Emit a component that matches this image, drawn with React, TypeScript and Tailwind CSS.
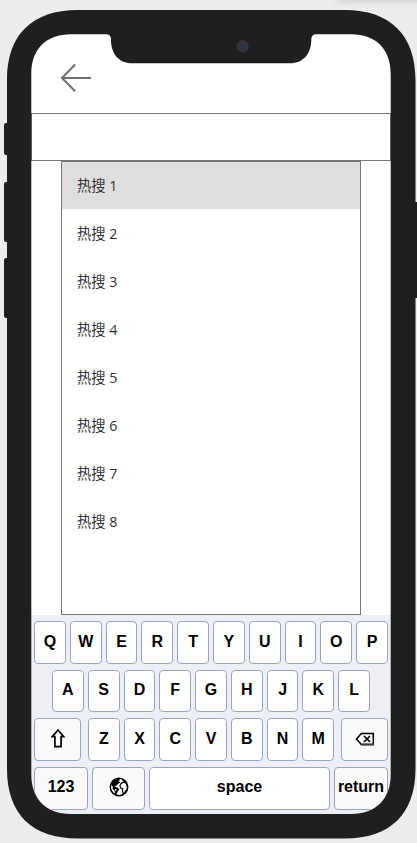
import type { ReactNode } from 'react';

const suggestions = [1, 2, 3, 4, 5, 6, 7, 8];

function Key({ children, className = 'flex-1 bg-white pb-px' }: { children?: ReactNode; className?: string }) {
  return (
    <div
      className={`flex h-full items-center justify-center rounded-[4px] border border-[#9aa5c4] leading-5 whitespace-nowrap ${className}`}
    >
      {children}
    </div>
  );
}

function Letters({ text }: { text: string }) {
  return (
    <>
      {text.split('').map((letter) => (
        <Key key={letter}>{letter}</Key>
      ))}
    </>
  );
}

function ShiftIcon() {
  return (
    <svg className="mb-[3px]" width="16" height="20" viewBox="0 0 16 20" fill="none" stroke="#000" strokeWidth="1.7">
      <path d="M8 2 2.300 8.700h2.600v10h6.200v-10h2.600z" />
    </svg>
  );
}

function GlobeIcon() {
  return (
    <svg width="20" height="20" viewBox="0 0 20 20" fill="none">
      <circle cx="10" cy="10" r="8.7" stroke="#000" strokeWidth="1.5" />
      <path d="M2 7 5 3.2 10 1.5l1 1.6-1.5 1 1.7 1.3-1.8 1.2-1.8 1.8-2 .3 1.4 1.5 2 .6 1.4 2-1.8 1.8-.8 3-1.7-.7-.6-3.1-2-2.1.4-1.8z" fill="#000" />
      <path d="M5.600 11.800 7.700 12.500 6.800 14.800z" fill="#fafafa" />
      <path d="m12 6.4 2.8-1.2 2 .8 1.7 3.6-.4 3-1.7 1.5-.8 2-1.4.6-.8-2.9.2-2.2-1.9-.6-.8-2.2z" stroke="#000" strokeWidth="1.2" />
      <path d="M13 3 15.600 3.400 17.200 5.600 14.600 5.100z" fill="#000" />
    </svg>
  );
}

function BackspaceIcon() {
  return (
    <svg className="mb-px" width="20" height="14" viewBox="0 0 20 14" fill="none" stroke="#000" strokeWidth="1.5">
      <path d="M6.3 1.5h12v11h-12L1.5 7z" />
      <path d="m9 4 6 6m0-6-6 6" strokeWidth="1.700" />
      <path d="M6.500 12.500h12" stroke="#444" strokeWidth="2" />
    </svg>
  );
}

function PhoneFrame() {
  return (
    <svg className="pointer-events-none absolute inset-0" width="417" height="843" viewBox="0 0 417 843">
      <path
        fill="#1f1f1f"
        fillRule="evenodd"
        d="M78 10H345C390 10 415.5 35 415.5 80V769C415.5 814 390 838.5 345 838.5H78C32 838.5 7 814 7 769V80C7 35 32 10 78 10Z
           M71 34.3C46 34.3 31.3 49 31.3 74V774.5C31.3 799 46 814 71 814H351C376 814 390.7 799 390.7 774.5V74C390.7 49 376 34.3 351 34.3H317C313 34.3 311.3 36 311.3 40C311.3 54 303 63.3 290 63.3H132C119 63.3 111 54 111 40C111 36 109.500 34.3 105.500 34.3Z"
      />
      <path
        fill="#1f1f1f"
        d="M8 123H6a2 2 0 0 0-2 2v28a2 2 0 0 0 2 2h2zM8 182H6a2 2 0 0 0-2 2v56a2 2 0 0 0 2 2h2zM8 258H6a2 2 0 0 0-2 2v56a2 2 0 0 0 2 2h2zM415 202h2v96h-2z"
      />
      <circle cx="242.500" cy="46.300" r="6.200" fill="#333436" />
      <circle cx="242.500" cy="46.300" r="3.200" fill="#29324c" />
    </svg>
  );
}

export default function App() {
  return (
    <div className="relative h-[843px] w-[417px] overflow-hidden bg-[#ededed] pt-[34px] pl-[31px]">
      <div className="absolute -top-2 left-[338px] h-2 w-[100px] shadow-[0_0_8px_rgba(0,0,0,0.2)]" />
      <div className="flex h-[780px] w-[360px] flex-col overflow-hidden rounded-[38px] bg-white">
        <header className="flex h-[79px] shrink-0 items-start pt-[29px] pl-[30px]">
          <svg width="31" height="30" viewBox="0 0 31 30" fill="none" stroke="#6e7079" strokeWidth="2">
            <path d="M30 15H1M14.200 1.500 .900 15l13.300 13.300" />
          </svg>
        </header>
        <input aria-label="Search" className="h-12 w-full shrink-0 border border-[#767676] bg-white px-3 outline-none" />
        <ul className="mx-[30px] h-[454px] shrink-0 border border-[#767676] bg-white font-['Open_Sans','Noto_Sans_CJK_SC',sans-serif] text-[14.300px] text-[#333]">
          {suggestions.map((n) => (
            <li key={n} className={`flex items-center pl-[15px] ${n === 1 ? 'h-[47px] bg-[#dfdfdf] pt-px' : 'h-12 bg-white pt-[2px]'}`}>
              热搜 {n}
            </li>
          ))}
        </ul>
        <section className="flex flex-1 flex-col gap-[6px] bg-[#eeeff4] px-[3px] pt-[6px] pb-[4.500px] font-['Liberation_Sans',Arial,sans-serif] text-[16px] font-bold text-black">
          <div className="flex min-h-0 flex-1 gap-1">
            <Letters text="QWERTYUIOP" />
          </div>
          <div className="flex min-h-0 flex-1 gap-1 px-[18px]">
            <Letters text="ASDFGHJKL" />
          </div>
          <div className="flex min-h-0 flex-1 gap-[7px]">
            <Key className="w-[47px] bg-[#fafafa] pb-px"><ShiftIcon /></Key>
            <div className="flex flex-1 gap-1">
              <Letters text="ZXCVBNM" />
            </div>
            <Key className="w-[47px] bg-[#fafafa] pb-px"><BackspaceIcon /></Key>
          </div>
          <div className="flex min-h-0 flex-1 gap-1">
            <Key className="w-[54px] bg-[#fafafa] pb-[2px]">123</Key>
            <Key className="w-[53px] bg-[#fafafa] pb-[2px]"><GlobeIcon /></Key>
            <Key className="flex-1 bg-white pb-[2px]">space</Key>
            <Key className="w-[54px] bg-[#fafafa] pb-[2px]">return</Key>
          </div>
        </section>
      </div>
      <PhoneFrame />
    </div>
  );
}
